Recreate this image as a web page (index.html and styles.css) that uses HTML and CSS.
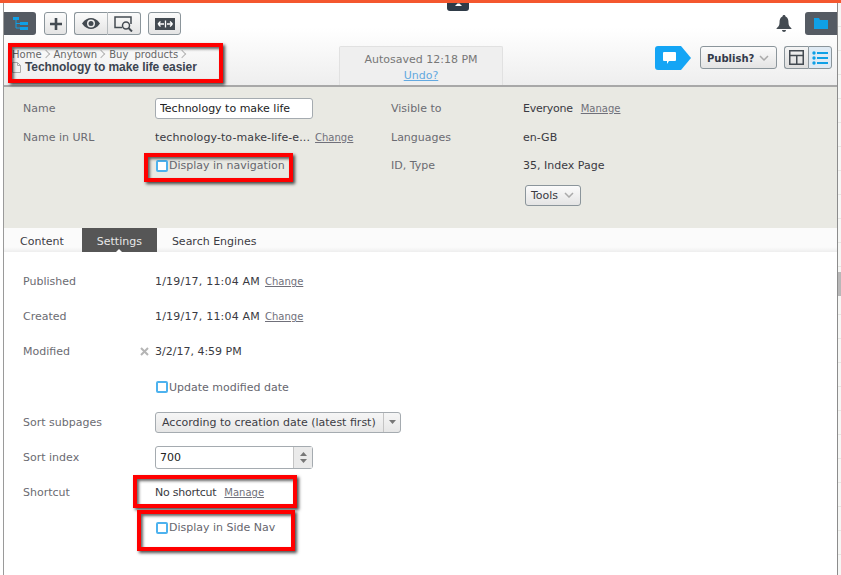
FILE: index.html
```html
<!DOCTYPE html>
<html lang="en">
<head>
<meta charset="utf-8">
<title>Technology to make life easier</title>
<link rel="stylesheet" href="styles.css">
</head>
<body>
<div class="topbar"></div>
<div class="collapse-tab"><svg width="7" height="3" viewBox="0 0 7 3"><path d="M0 3L2.500 .5h2L7 3z" fill="#fff"/></svg></div>
<div class="shell">
  <div class="frame">
    <header class="head">
      <div class="toolbar">
        <button class="tool tool-dark"><svg width="15" height="13" viewBox="0 0 15 13"><path d="M0 0h6v3H0zM7 5h8v3H7zM7 10h8v3H7z" fill="#0fa0e6"/><path d="M3 3v8h4M3 6.500h4" stroke="#0fa0e6" fill="none"/></svg></button>
        <button class="tool tool-plus"><svg width="12" height="12" viewBox="0 0 12 12"><path d="M4.700 0h2.600v4.700H12v2.600H7.300V12H4.700V7.300H0V4.700h4.700z" fill="#444b52"/></svg></button>
        <div class="group">
          <button class="tool tool-eye"><svg width="18" height="11" viewBox="0 0 18 11"><path fill-rule="evenodd" d="M0 5.500C3 1.300 6 0 9 0s6 1.300 9 5.500c-3 4.200-6 5.500-9 5.500S3 9.700 0 5.500zm9-4a4 4 0 1 0 0 8 4 4 0 0 0 0-8z" fill="#444b52"/><circle cx="9" cy="5.500" r="2.500" fill="#444b52"/></svg></button>
          <button class="tool tool-preview"><svg width="20" height="16" viewBox="0 0 20 16"><path d="M8 11.500H1V1h16v7" fill="none" stroke="#444b52" stroke-width="1.500"/><circle cx="12" cy="9.500" r="3.500" fill="none" stroke="#444b52" stroke-width="1.500"/><path d="M14.500 12L18 15.500" stroke="#444b52" stroke-width="2"/></svg></button>
        </div>
        <button class="tool tool-swap"><svg width="20" height="12" viewBox="0 0 20 12"><rect width="20" height="12" fill="#444b52"/><path d="M9 6H3M3 6l2.500-2.500M3 6l2.500 2.500M10.500 2.500v7M12 6h5.500M17.500 6L15 3.500M17.500 6L15 8.500" stroke="#fff" stroke-width="1.300" fill="none"/></svg></button>
        <div class="spacer"></div>
        <svg class="bell" width="16" height="17" viewBox="0 0 16 17"><path d="M8 0c1 0 1.500.7 1.500 1.500C12 2.500 12.500 5 12.500 8c0 2.500 1.500 4 3 5.500V14H.500v-.5c1.500-1.500 3-3 3-5.500 0-3 .5-5.500 3-6.500C6.500.7 7 0 8 0zM6 15h4c0 1-1 2-2 2s-2-1-2-2z" fill="#444b52"/></svg>
        <button class="tool tool-folder"><svg width="14" height="11" viewBox="0 0 14 11"><path d="M0 0h5l1 2h8v9H0z" fill="#0fa0e6"/></svg></button>
      </div>
      <div class="subhead">
        <div class="crumbs">
          <div class="trail"><span>Home</span><i></i><span>Anytown</span><i></i><span>Buy products</span><i></i></div>
          <h1 class="title"><svg width="9" height="11" viewBox="0 0 9 11"><path d="M.500.500h5l3 3v7h-8zM5.500.500v3h3" fill="#f4f4f4" stroke="#aaa"/></svg>Technology to make life easier</h1>
        </div>
        <div class="autosave">
          <div>Autosaved 12:18 PM</div>
          <a class="undo">Undo?</a>
        </div>
        <div class="actions">
          <div class="comment"><svg width="13" height="12" viewBox="0 0 13 12"><path d="M1 0h11a1 1 0 0 1 1 1v7a1 1 0 0 1-1 1H6l-2 3V9H1a1 1 0 0 1-1-1V1a1 1 0 0 1 1-1z" fill="#fff"/></svg></div>
          <button class="select publish">Publish?<svg width="10" height="6" viewBox="0 0 10 6"><path d="M1 1l4 4 4-4" fill="none" stroke="#aaa" stroke-width="1.500"/></svg></button>
          <div class="group views">
            <button class="view"><svg width="15" height="15" viewBox="0 0 15 15"><path d="M.750.750h13.500v13.500H.750zM.750 5.500h13.500M7.750 5.500v8.750" fill="none" stroke="#444b52" stroke-width="1.500"/></svg></button>
            <button class="view view-on"><svg width="16" height="14" viewBox="0 0 16 14"><g fill="#0fa0e6"><circle cx="2" cy="2" r="1.700"/><circle cx="2" cy="7" r="1.700"/><circle cx="2" cy="12" r="1.700"/><path d="M5 1h11v2H5zM5 6h11v2H5zM5 11h11v2H5z"/></g></svg></button>
          </div>
        </div>
      </div>
    </header>

    <section class="panel">
      <span class="label">Name</span>
      <div class="val"><input class="field name-field" value="Technology to make life"></div>
      <span class="label">Visible to</span>
      <div class="val"><span class="tight">Everyone</span><a class="link link-far">Manage</a></div>

      <span class="label">Name in URL</span>
      <div class="val"><span class="wide-url">technology-to-make-life-e...</span><a class="link">Change</a></div>
      <span class="label">Languages</span>
      <div class="val">en-GB</div>

      <span></span>
      <label class="check"><i class="box"></i>Display in navigation</label>
      <span class="label">ID, Type</span>
      <div class="val">35, Index Page</div>

      <span></span><span></span><span></span>
      <div class="val"><button class="select tools">Tools<svg width="10" height="6" viewBox="0 0 10 6"><path d="M1 1l4 4 4-4" fill="none" stroke="#aaa" stroke-width="1.500"/></svg></button></div>
    </section>

    <nav class="tabs">
      <a class="tab">Content</a>
      <a class="tab tab-on">Settings</a>
      <a class="tab">Search Engines</a>
    </nav>

    <section class="settings">
      <div class="row"><span class="label">Published</span><span class="pin"></span><div class="val"><span class="wide">1/19/17, 11:04 AM</span><a class="link">Change</a></div></div>
      <div class="row"><span class="label">Created</span><span class="pin"></span><div class="val"><span class="wide">1/19/17, 11:04 AM</span><a class="link">Change</a></div></div>
      <div class="row"><span class="label">Modified</span><span class="pin"><svg class="pin-icon" width="9" height="9" viewBox="0 0 9 9"><path d="M1 1l7 7M8 1L1 8" stroke="#b5b5b5" stroke-width="2"/></svg></span><div class="val">3/2/17, 4:59 PM</div></div>
      <div class="row"><span class="label"></span><span class="pin"></span><label class="check"><i class="box"></i>Update modified date</label></div>
      <div class="row"><span class="label">Sort subpages</span><span class="pin"></span>
        <div class="combo"><span class="combo-text">According to creation date (latest first)</span><span class="combo-arrow"><svg width="7" height="4" viewBox="0 0 7 4"><path d="M0 0h7L3.500 4z" fill="#777"/></svg></span></div></div>
      <div class="row"><span class="label">Sort index</span><span class="pin"></span>
        <div class="spin"><span class="spin-text">700</span><span class="spin-arrows"><svg width="7" height="4" viewBox="0 0 7 4"><path d="M0 4h7L3.500 0z" fill="#777"/></svg><svg width="7" height="4" viewBox="0 0 7 4"><path d="M0 0h7L3.500 4z" fill="#777"/></svg></span></div></div>
      <div class="row"><span class="label">Shortcut</span><span class="pin"></span><div class="val"><span class="tight">No shortcut</span><a class="link link-far">Manage</a></div></div>
      <div class="row"><span class="label"></span><span class="pin"></span><label class="check"><i class="box"></i>Display in Side Nav</label></div>
    </section>
  </div>
  <div class="gutter"><div class="thumb"></div></div>
</div>

<div class="mark mark-title"></div>
<div class="mark mark-nav"></div>
<div class="mark mark-shortcut"></div>
<div class="mark mark-side"></div>
</body>
</html>
```
FILE: styles.css
```css
* { box-sizing: border-box; }
html, body { margin: 0; height: 100%; overflow: hidden; }
body {
  position: relative;
  background: #fff;
  font-family: "DejaVu Sans", Verdana, sans-serif;
  font-size: 11px;
  color: #3c3c44;
}
button { font: inherit; color: inherit; padding: 0; }

.topbar { height: 3px; background: #f4572e; }
.collapse-tab {
  position: absolute; left: 447px; top: 3px; width: 22px; height: 8px;
  background: #2f3b48; border-radius: 0 0 3px 3px;
  display: flex; align-items: flex-start; justify-content: center;
}

.shell { display: flex; height: 572px; padding-left: 3px; }
.frame {
  width: 835px; height: 100%;
  border-left: 1px solid #9a9a9a; border-right: 1px solid #8c8c8c;
  display: flex; flex-direction: column;
}
.gutter {
  position: relative; flex: 1;
  background: repeating-linear-gradient(#f6f7f5 0 23px, #e6e6e3 23px 24px);
}
.thumb { position: absolute; left: 0; right: 0; top: 269px; height: 24px; background: #b8b8b8; }

.head {
  height: 84px; flex: none;
  background: linear-gradient(#fff 0, #fff 30%, #eeeeee 100%);
  border-bottom: 2px solid #a8a8a8;
  display: flex; flex-direction: column;
}
.toolbar { display: flex; align-items: center; gap: 8px; height: 24px; margin-top: 9px; }
.tool {
  height: 23px; display: flex; align-items: center; justify-content: center;
  border: 1px solid #8b959b; border-radius: 3px;
  background: linear-gradient(#fbfbfb, #e4e4e4);
}
.tool-dark { width: 32px; background: #555b63; border: 0; border-radius: 0 3px 3px 0; }
.tool-plus { width: 23px; }
.group { display: flex; margin-left: -1px; }
.tool-eye { width: 34px; border-radius: 3px 0 0 3px; border-right: 1px solid #b5babd; }
.tool-preview { width: 33px; border-radius: 0 3px 3px 0; border-left: 0; }
.tool-swap { width: 33px; margin-left: -1px; }
.spacer { flex: 1; }
.bell { margin-right: 5px; }
.tool-folder { width: 32px; background: #555b63; border: 0; border-radius: 3px 0 0 3px; }

.subhead { display: flex; flex: 1; margin-top: 11px; }
.crumbs { width: 335px; padding-left: 8px; padding-top: 2px; }
.trail { display: flex; align-items: center; gap: 4px; font-size: 10px; word-spacing: 3px; color: #666; height: 12px; }
.trail i {
  width: 6px; height: 6px; margin-left: -3px; margin-right: 1px;
  border-top: 1px solid #b5b5b5; border-right: 1px solid #b5b5b5; transform: rotate(45deg);
}
.title {
  display: flex; align-items: center; gap: 4px; margin: 0; height: 14px;
  font: bold 12px "Liberation Sans", Arial, sans-serif; color: #3c4450; letter-spacing: -.07px;
}
.autosave {
  width: 164px; height: 39px;
  border: 1px solid #e1e1e1; border-bottom: 0; border-radius: 2px 2px 0 0;
  background: #efefef; color: #777;
  text-align: center; line-height: 16px; padding-top: 5px;
}
.undo { color: #63a9e0; text-decoration: underline; }
.actions { display: flex; align-items: flex-start; flex: 1; margin-left: 152px; }
.comment {
  width: 36px; height: 24px; display: flex; align-items: center; padding: 0 0 0 8px;
  background: #14a5f5;
  clip-path: polygon(0 0, 26px 0, 36px 12px, 26px 24px, 0 24px);
  border-radius: 3px;
}
.select {
  display: flex; align-items: center; justify-content: space-between;
  border: 1px solid #8b959b; border-radius: 3px;
  background: linear-gradient(#fbfbfb, #e4e4e4);
}
.publish { width: 77px; height: 23px; margin-left: 9px; padding: 1px 7px 0 6px; font-size: 10px; font-weight: bold; color: #333a4a; }
.views { margin-left: 7px; }
.view {
  width: 24px; height: 23px; display: flex; align-items: center; justify-content: center;
  border: 1px solid #8b959b; border-radius: 3px 0 0 3px; border-right: 0;
  background: linear-gradient(#f4f4f4, #dedede);
}
.view-on { border-radius: 0 3px 3px 0; border-right: 1px solid #8b959b; background: #dfeaf4; }

.panel {
  height: 141px; flex: none;
  background: #e9e9e3;
  padding: 7px 0 0 19px;
  display: grid;
  grid-template-columns: 132px 236px 132px 1fr;
  grid-template-rows: 28px 30px 27px 32px;
  align-items: center;
}
.label { color: #6b6b72; }
.val { color: #3a3a42; display: flex; align-items: center; }
.wide { letter-spacing: .2px; }
.wide-url { letter-spacing: .1px; }
.tight { letter-spacing: -.25px; }
.link { color: #70707a; text-decoration: underline; margin-left: 5px; font-size: 10px; }
.link-far { margin-left: 8px; }
.field {
  font: inherit; color: #222;
  width: 158px; height: 21px; padding: 0 4px;
  border: 1px solid #a5abb0; border-radius: 3px; background: #fff;
}
.check { display: flex; align-items: center; color: #66666e; }
.box {
  width: 12px; height: 12px; margin: 0 1px;
  border: 2px solid #4db2ee; border-radius: 2px; background: #fff;
}
.tools { width: 56px; height: 21px; padding: 0 6px 0 5px; margin-left: 2px; }

.tabs {
  height: 24px; flex: none; display: flex; padding-left: 4px;
  background: linear-gradient(#fbfbfb 80%, #eeeeee);
}
.tab { padding: 0 12px; line-height: 27px; color: #3c3c44; }
.tab-on { position: relative; background: #565656; color: #e8e8e8; padding: 0 15px; margin: 0 3px 0 6px; }
.tab-on::after {
  content: ""; position: absolute; left: 50%; bottom: 0; margin-left: -3px;
  border: 3px solid transparent; border-top: 0; border-bottom-color: #fff;
}

.settings { flex: 1; padding: 12px 0 0 19px; display: flex; flex-direction: column; }
.row { height: 35.200px; flex: none; display: flex; align-items: center; }
.row .label { width: 116px; }
.pin { width: 16px; display: flex; }
.pin-icon { margin-left: 1px; }
.combo {
  width: 246px; height: 21px; display: flex; align-items: center;
  border: 1px solid #a5abb0; border-radius: 3px;
  background: linear-gradient(#f6f6f6, #e6e6e6);
}
.combo-text { flex: 1; padding-left: 6px; }
.combo-arrow { width: 17px; height: 100%; border-left: 1px solid #c4c4c4; display: flex; align-items: center; justify-content: center; }
.spin {
  width: 158px; height: 23px; display: flex; align-items: center;
  border: 1px solid #a5abb0; border-radius: 3px; background: #fff; color: #222;
}
.spin-text { flex: 1; padding-left: 4px; }
.spin-arrows {
  width: 19px; height: 100%; border-left: 1px solid #c4c4c4; background: #eaeaea;
  display: flex; flex-direction: column; align-items: center; justify-content: center; gap: 3px;
}

.mark {
  position: absolute; border: 4px solid #f00;
  box-shadow: 2px 2px 3px rgba(0,0,0,.7), inset 2px 2px 3px rgba(0,0,0,.6);
}
.mark-title { left: 8px; top: 43px; width: 215px; height: 40px; }
.mark-nav { left: 144px; top: 153px; width: 149px; height: 29px; }
.mark-shortcut { left: 133px; top: 475px; width: 164px; height: 33px; }
.mark-side { left: 137px; top: 510px; width: 158px; height: 41px; }
```
